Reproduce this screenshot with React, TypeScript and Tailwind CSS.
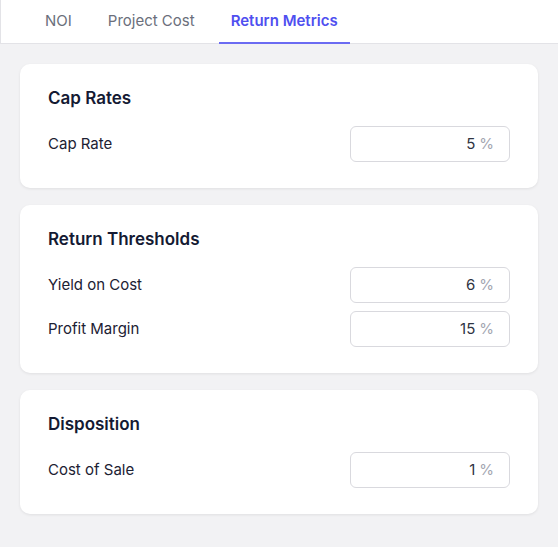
import { useState } from 'react';

type Field = { label: string; value: string };
type Section = { title: string; fields: Field[] };

const sections: Section[] = [
  { title: 'Cap Rates', fields: [{ label: 'Cap Rate', value: '5' }] },
  {
    title: 'Return Thresholds',
    fields: [
      { label: 'Yield on Cost', value: '6' },
      { label: 'Profit Margin', value: '15' },
    ],
  },
  { title: 'Disposition', fields: [{ label: 'Cost of Sale', value: '1' }] },
];

const tabs = ['NOI', 'Project Cost', 'Return Metrics'];

function PercentInput({ value }: { value: string }) {
  return (
    <div className="flex h-[36px] w-[160px] items-center justify-end gap-1 rounded-md border border-[#d9d9de] bg-white pr-[15px]">
      <span className="text-[15px] text-[#2f3443]">{value}</span>
      <span className="text-[15px] text-[#a3a6b1]">%</span>
    </div>
  );
}

export default function App() {
  const [active, setActive] = useState('Return Metrics');

  return (
    <div className="min-h-[547px] bg-[#f2f2f4] font-['Inter',sans-serif]">
      {/* Tabs */}
      <div className="flex h-[44px] gap-3 border-b border-l border-[#e3e3e7] bg-white pl-8">
        {tabs.map((t) => (
          <button
            key={t}
            onClick={() => setActive(t)}
            className={`relative px-3 text-[15px] ${
              active === t ? 'font-semibold text-[#4f4ff0]' : 'text-[#6b6f7b]'
            }`}
          >
            {t}
            {active === t && <span className="absolute bottom-[-1px] left-0 right-0 h-[2px] bg-[#6b6bf2]" />}
          </button>
        ))}
      </div>

      {/* Cards */}
      <div className="flex flex-col gap-[17px] px-5 pt-5">
        {sections.map((s) => (
          <div
            key={s.title}
            className="rounded-[10px] bg-white px-7 pt-6 pb-[26px] shadow-[0_1px_3px_rgba(0,0,0,0.08)]"
          >
            <h2 className="h-[20px] text-[17px] leading-[20px] font-semibold text-[#141a33]">{s.title}</h2>
            <div className="mt-[18px] flex flex-col gap-2">
              {s.fields.map((f) => (
                <div key={f.label} className="flex items-center justify-between">
                  <span className="text-[15px] text-[#1c2133]">{f.label}</span>
                  <PercentInput value={f.value} />
                </div>
              ))}
            </div>
          </div>
        ))}
      </div>
    </div>
  );
}
